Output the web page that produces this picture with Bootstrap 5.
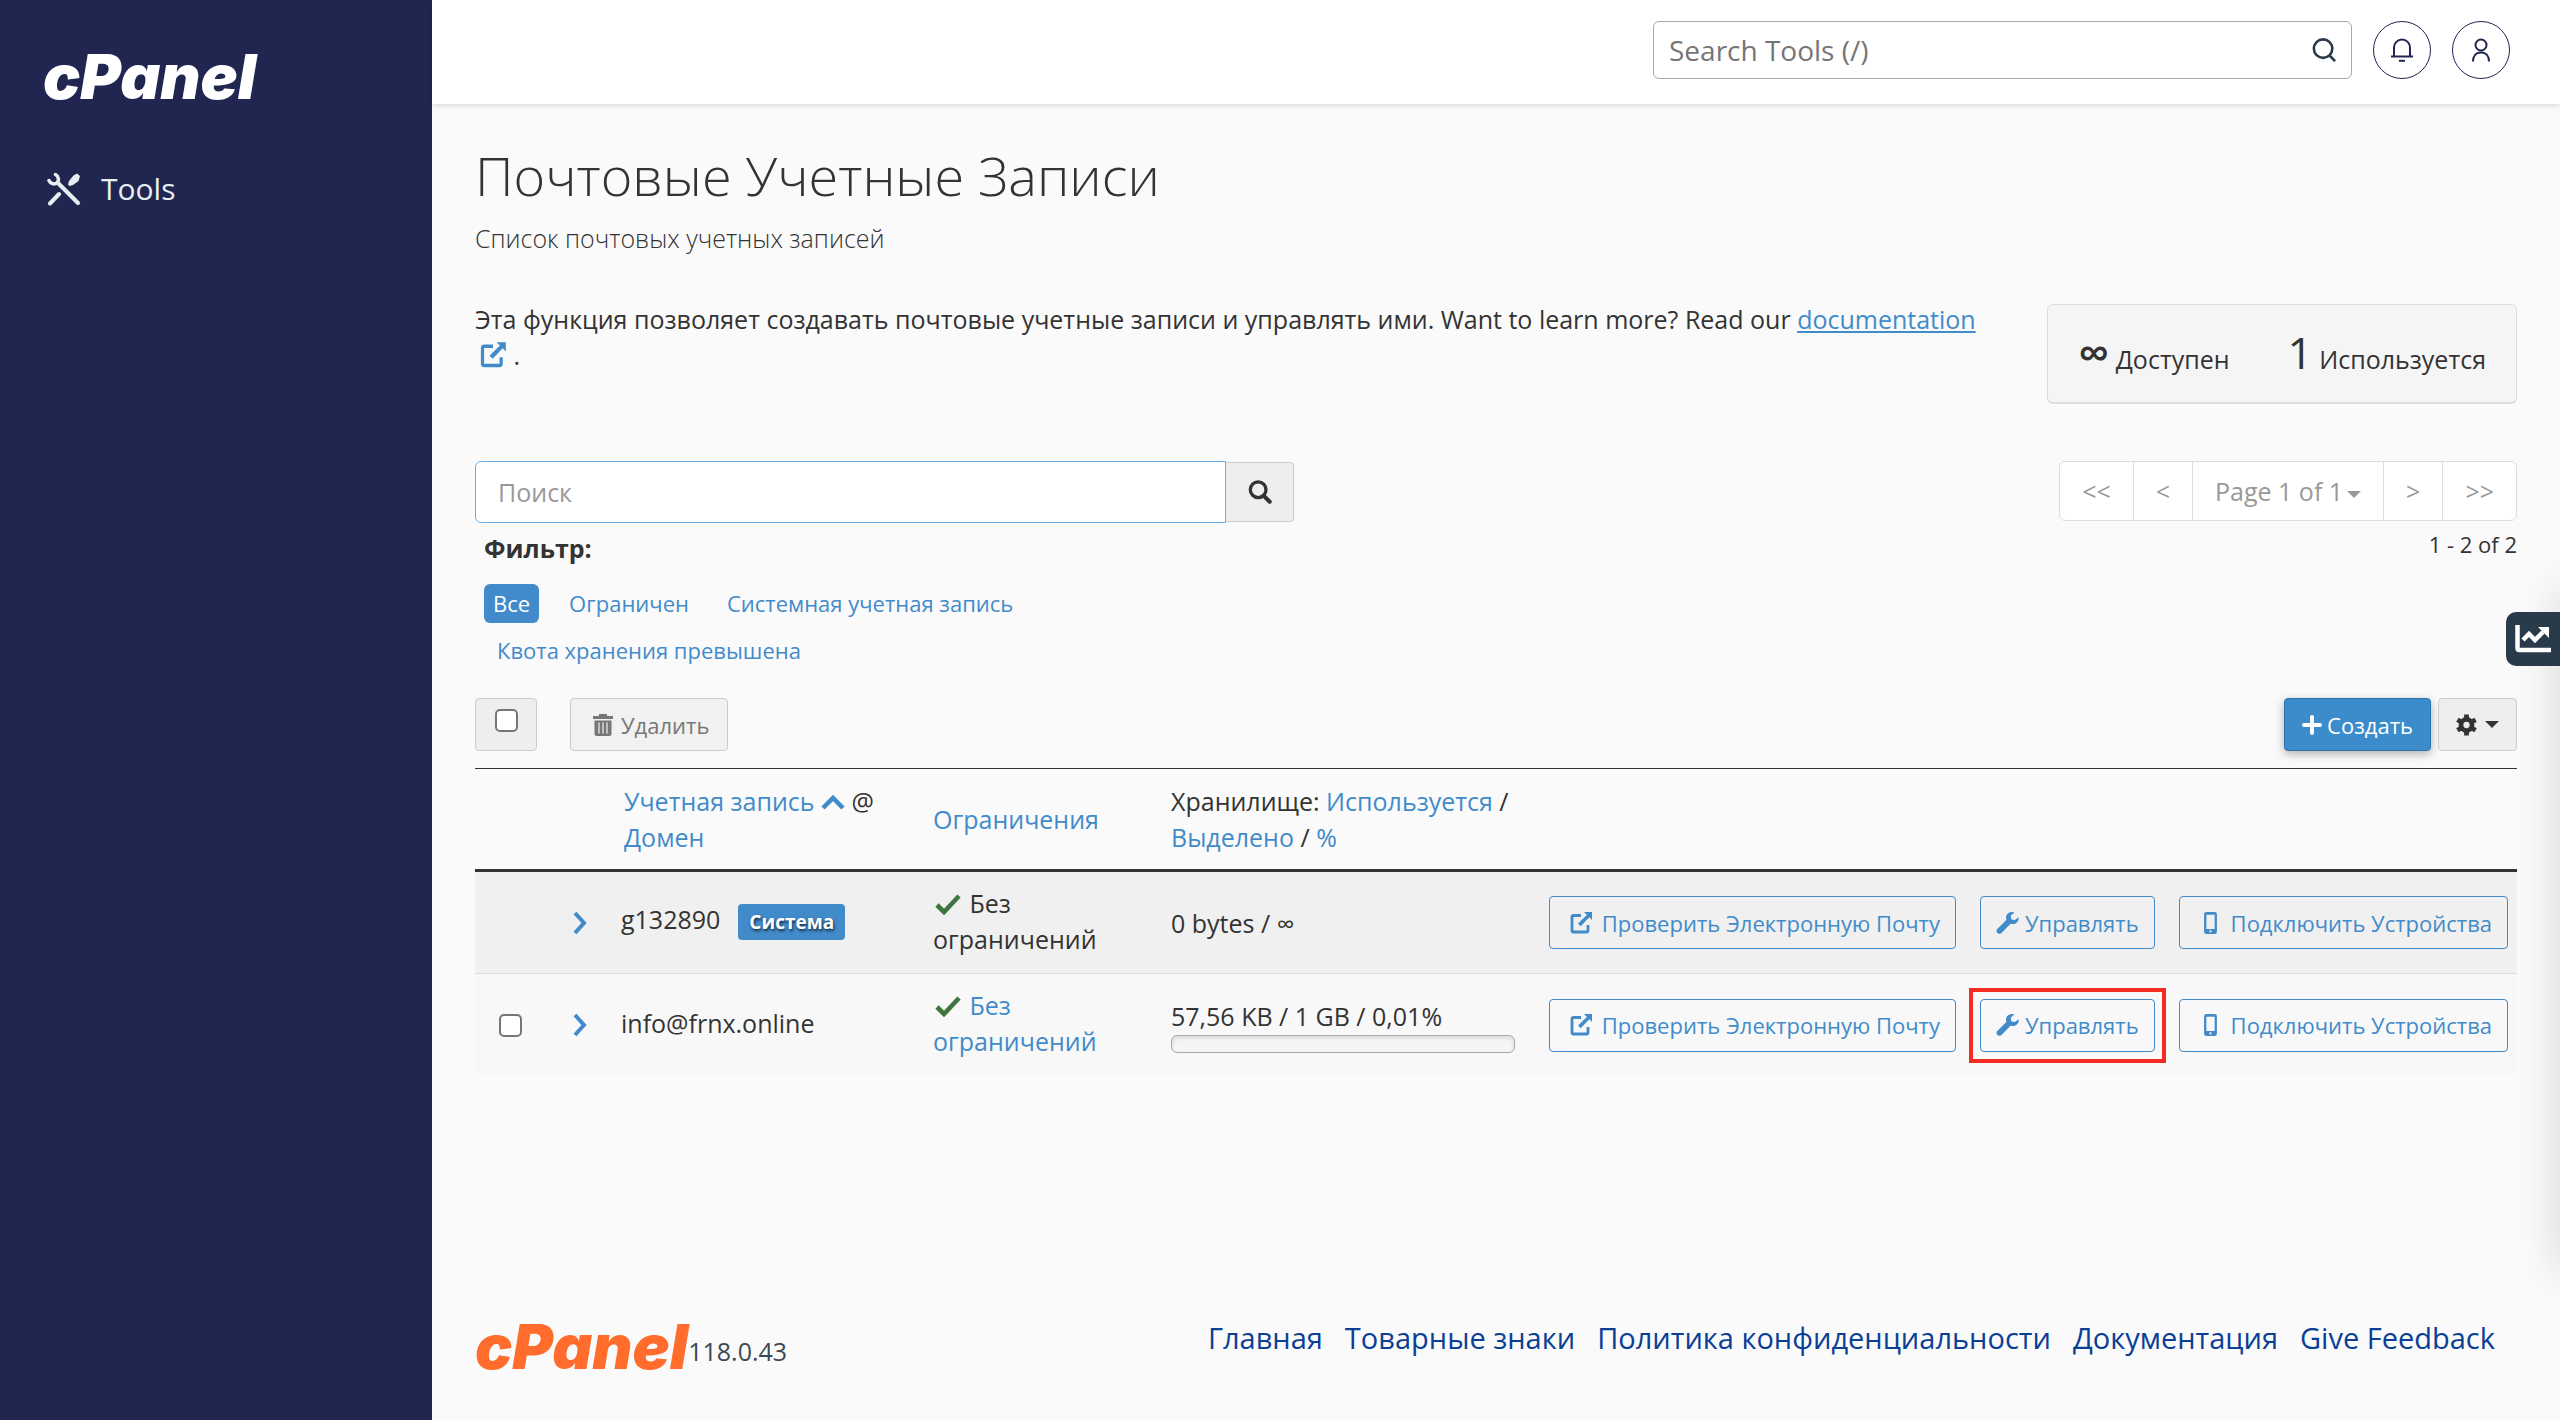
<!DOCTYPE html>
<html lang="ru">
<head>
<meta charset="utf-8">
<meta name="viewport" content="width=device-width, initial-scale=1">
<title>cPanel - Почтовые Учетные Записи</title>
<link rel="stylesheet" href="https://cdn.jsdelivr.net/npm/bootstrap@5.3.0/dist/css/bootstrap.min.css">
<style>
:root { --ink:#333; --blue:#428bca; --navy:#212651; }
body { font-family:"Open Sans","Noto Sans",sans-serif; font-size:25px; line-height:36px; color:var(--ink); background:#fafafa; }
a { color:var(--blue); text-decoration:none; }
svg { display:block; flex:none; }
.ico { width:24px; height:24px; }
.side { width:432px; background:var(--navy); flex:none; padding:42px 0 0 43px; }
.brand { font-family:Inter,sans-serif; font-weight:900; font-style:italic; font-size:62px; line-height:70px; color:#fff; }
.side-link { color:#e6eef2; font-size:30px; line-height:42px; margin-top:56px; gap:20px; padding-left:4px; }
.side-link svg { width:34px; height:34px; }
.topbar { height:104px; background:#fff; box-shadow:0 2px 5px rgba(0,0,0,.12); padding:21px 50px 0 0; gap:21px; }
.tool-search { width:699px; height:58px; border:1px solid #aaa; border-radius:6px; background:#fff; padding:0 15px; }
.tool-search input { font-size:28px; border:0; outline:0; min-width:0; background:none; color:#333; padding:0; }
.tool-search input::placeholder { color:#757575; opacity:1; }
.plain { background:none; border:0; padding:0; }
.round-btn { width:58px; height:58px; border:1px solid var(--navy); border-radius:50%; background:#fff; color:var(--navy); padding:0; }
.page-body { padding:40px 43px 0 43px; }
h1 { font-size:54px; line-height:62px; font-weight:300; margin:0 0 14px; }
.sub { font-weight:300; margin:0; }
.intro { margin-top:45px; gap:44px; }
.intro p { margin:0; }
.doc { text-decoration:underline; }
.intro p svg { display:inline-block; vertical-align:-4px; width:28px; height:28px; margin-left:4px; }
.stats { margin-top:3px; height:100px; background:#f5f5f5; border:1px solid #ddd; border-bottom-width:2px; border-radius:6px; padding:22px 30px 0; gap:58px; }
.big-num { font-size:44px; line-height:50px; }
.find-row { margin-top:57px; }
.find-col { width:819px; }
.find { height:62px; border:1px solid #66afe9; border-radius:6px 0 0 6px; font-size:25px; padding:0 22px; color:#333; background:#fff; outline:0; min-width:0; }
.find::placeholder { color:#999; opacity:1; }
.grey-btn { background:#eee; border:1px solid #ccc; border-radius:4px; color:#333; font-size:22px; line-height:32px; padding:0; }
.find-btn { width:68px; height:60px; border-left:0; border-radius:0 4px 4px 0; }
.filters { padding:7px 9px 0; }
.filters b { display:block; margin-bottom:18px; }
.chips { column-gap:8px; row-gap:8px; font-size:22px; line-height:31px; }
.chips a { padding:4px 13px; border-radius:6px; }
.chips a.all { background:var(--blue); color:#fff; padding:4px 9px; margin-right:9px; }
.chips a.wide { margin-right:4px; }
.pager { height:60px; background:#fff; border:1px solid #ddd; border-radius:6px; }
.pager button { border:0; background:none; color:#999; padding:0 22px; border-right:1px solid #ddd; font-size:25px; line-height:36px; }
.pager button:last-child { border:0; }
.range { font-size:22px; line-height:30px; margin-top:8px; }
.tri { display:inline-block; border:7px solid transparent; border-top-color:currentColor; border-bottom:0; vertical-align:middle; }
.tools { margin-top:28px; margin-bottom:17px; }
.tools .grey-btn { height:53px; }
.tools .pick { width:62px; margin-right:33px; padding-top:10px; }
.tick { width:23px; height:23px; margin:0; appearance:none; border:2px solid #767676; border-radius:5px; background:#fff; display:block; }
.tools .del { padding:0 18px 0 22px; color:#777; gap:8px; background:#f1f1f1; }
.create { height:53px; background:#3c8ccc; border:1px solid #2f73ad; border-radius:4px; color:#fff; font-size:22px; line-height:32px; padding:0 17px; gap:5px; box-shadow:0 3px 10px rgba(0,0,0,.3); margin-right:7px; }
.gear { width:79px; gap:8px; }
.acct { width:100%; table-layout:fixed; border-collapse:separate; border-spacing:0; border-top:1px solid #333; }
.acct th { font-weight:400; padding:14px 0; border-bottom:3px solid #333; vertical-align:middle; }
.acct th.name { padding-left:3px; }
.acct td { padding:14px 0; height:102px; vertical-align:middle; }
.acct td.up { padding:12px 0 16px; }
.acct tbody tr:first-child td { background:#f0f0f0; border-bottom:1px solid #ddd; }
.acct tbody tr:last-child td { background:#f8f8f8; }
.acct svg.inl { display:inline-block; vertical-align:-2px; }
.acct svg.sort { display:inline-block; vertical-align:1px; }
.sys { background:var(--blue); color:#fff; font-size:19px; line-height:28px; font-weight:700; padding:4px 11px; border-radius:4px; text-shadow:1px 2px 3px rgba(0,0,0,.7); margin-left:18px; }
.usage { width:344px; height:18px; border:1px solid #aaa; border-radius:6px; background:#f5f5f5; box-shadow:inset 0 2px 4px rgba(0,0,0,.12); margin-top:1px; }
.acts { gap:24px; padding-right:9px; }
.act { height:53px; border:1px solid var(--blue); border-radius:4px; background:transparent; color:var(--blue); font-size:22px; line-height:32px; padding:0 15px; white-space:nowrap; gap:5px; }
.marked { outline:4px solid #f42b20; outline-offset:7px; }
.foot { padding:0 65px 38px 43px; }
.foot .brand { color:#ff6c2c; }
.ver { color:#3a4955; padding-bottom:13px; }
.foot nav { font-size:29px; line-height:40px; gap:22px; padding-bottom:18px; }
.foot nav a { color:#0b3f96; }
.stat-tab { position:fixed; right:0; top:612px; width:54px; height:54px; background:#293a4a; border:0; border-radius:10px 0 0 10px; padding:0 0 0 8px; color:#fff; }
.edge { position:fixed; right:-20px; top:590px; width:20px; bottom:150px; box-shadow:0 0 40px rgba(0,0,0,.2); }
</style>
<script src="https://cdn.jsdelivr.net/npm/bootstrap@5.3.0/dist/js/bootstrap.bundle.min.js"></script>
</head>
<body>
<svg width="0" height="0" class="position-absolute" aria-hidden="true">
  <symbol id="ext" viewBox="0 0 24 24"><path d="M12 4.500H4.500a1.500 1.500 0 0 0-1.500 1.500V19.500a1.500 1.500 0 0 0 1.500 1.500H17.500a1.500 1.500 0 0 0 1.500-1.500V14" fill="none" stroke="currentColor" stroke-width="2.800"/><path d="M15 1h8v8l-2.700-2.700-8.600 9-2.700-2.700 8.900-8.700z" fill="currentColor"/></symbol>
  <symbol id="wrench" viewBox="0 0 24 24"><path d="M22.600 6.200 19 9l-3.600-.5-.7-3.800 3.500-3.300C15 .3 11.500 1.600 10.400 4.600c-.6 1.700-.4 3 .1 4.200L1.500 17.800c-1.300 1.300-1.300 3.100-.2 4.200s2.900 1.100 4.200-.1l9.100-9.200c1.500.6 3.300.6 4.900-.3 2.300-1.200 3.700-3.600 3.100-6.200z" fill="currentColor"/></symbol>
  <symbol id="phone" viewBox="0 0 16 24"><path fill-rule="evenodd" d="M3.500 0h9A2.500 2.500 0 0 1 15 2.500v19a2.500 2.500 0 0 1-2.500 2.500h-9A2.500 2.500 0 0 1 1 21.500v-19A2.500 2.500 0 0 1 3.500 0zM3.500 3v15.500h9V3zM8 20a1.200 1.200 0 1 0 0 2.400A1.200 1.200 0 0 0 8 20z" fill="currentColor"/></symbol>
  <symbol id="check" viewBox="0 0 26 22"><path d="M2 12l7 7L24 3" fill="none" stroke="#3c763d" stroke-width="4.600"/></symbol>
  <symbol id="chev" viewBox="0 0 16 24"><path d="M3 2l9 10-9 10" fill="none" stroke="currentColor" stroke-width="4"/></symbol>
  <symbol id="lens" viewBox="0 0 26 26"><circle cx="11" cy="10.500" r="8.500" fill="none" stroke="currentColor" stroke-width="3.600"/><path d="M17 17l6.500 6.500" stroke="currentColor" stroke-width="4.400" stroke-linecap="round"/></symbol>
</svg>
<div class="d-flex min-vh-100">
  <aside class="side">
    <div class="brand">cPanel</div>
    <a href="#" class="side-link d-flex align-items-center">
      <svg viewBox="0 0 34 34" fill="none" stroke="currentColor" stroke-width="4" stroke-linecap="round"><path d="M10.500 10.500L31 31"/><path d="M12 22L3 31.500"/><path d="M8.500 2.500a5.500 5.500 0 0 1 1.500 8.500A5.500 5.500 0 0 1 2 8.500" stroke-width="3.500"/><path d="M30 1.500l3 2.500-1.500 5-5.500 4-3.500 1-1.500-1.500 1-3.500 4.500-5.500z" fill="currentColor" stroke="none"/></svg>
      Tools</a>
  </aside>
  <main class="flex-grow-1 d-flex flex-column">
    <header class="topbar d-flex justify-content-end align-items-start">
      <form class="tool-search d-flex align-items-center">
        <input type="search" class="flex-grow-1" placeholder="Search Tools (/)" aria-label="Search Tools">
        <button class="plain" type="button" aria-label="Search"><svg class="ico" viewBox="0 0 26 26" fill="none" stroke="#293a4a" stroke-width="2.800"><circle cx="12" cy="11.500" r="10"/><path d="M19 19l6 6"/></svg></button>
      </form>
      <button class="round-btn d-flex align-items-center justify-content-center" type="button" aria-label="Notifications"><svg width="22" height="24" viewBox="0 0 22 24" fill="none" stroke="currentColor" stroke-width="2"><path d="M0 18.500h22M3 18V9.500a8 8 0 0 1 16 0V18"/><path d="M8 22.800h6"/></svg></button>
      <button class="round-btn d-flex align-items-center justify-content-center" type="button" aria-label="Account"><svg width="18" height="24" viewBox="0 0 18 24" fill="none" stroke="currentColor" stroke-width="2"><circle cx="9" cy="7" r="5.500"/><path d="M1 23.500c0-5 2.500-9 8-9s8 4 8 9"/></svg></button>
    </header>
    <div class="page-body flex-grow-1">
      <h1>Почтовые Учетные Записи</h1>
      <p class="sub">Список почтовых учетных записей</p>
      <div class="intro d-flex align-items-start">
        <p class="flex-grow-1">Эта функция позволяет создавать почтовые учетные записи и управлять ими. Want to learn more? Read our <a href="#" class="doc">documentation</a> <a href="#" aria-label="Открыть документацию"><svg><use href="#ext"/></svg></a> .</p>
        <div class="stats d-flex text-nowrap">
          <span><span class="big-num fw-semibold">∞</span> Доступен</span>
          <span><span class="big-num">1</span> Используется</span>
        </div>
      </div>
      <div class="find-row d-flex justify-content-between align-items-start">
        <div class="find-col">
          <div class="d-flex align-items-center">
            <input class="find flex-grow-1" type="text" placeholder="Поиск" aria-label="Поиск">
            <button class="grey-btn find-btn d-flex align-items-center justify-content-center" type="button" aria-label="Найти"><svg class="ico"><use href="#lens"/></svg></button>
          </div>
          <div class="filters">
            <b>Фильтр:</b>
            <div class="chips d-flex flex-wrap">
              <a href="#" class="all">Все</a><a href="#" class="wide">Ограничен</a><a href="#">Системная учетная запись</a><a href="#">Квота хранения превышена</a>
            </div>
          </div>
        </div>
        <div class="text-end">
          <div class="pager d-flex">
            <button type="button">&lt;&lt;</button><button type="button">&lt;</button><button type="button">Page 1 of 1<span class="tri ms-1"></span></button><button type="button">&gt;</button><button type="button">&gt;&gt;</button>
          </div>
          <div class="range">1 - 2 of 2</div>
        </div>
      </div>
      <div class="tools d-flex">
        <label class="grey-btn pick d-flex justify-content-center"><input class="tick" type="checkbox" aria-label="Выбрать все"></label>
        <button class="grey-btn del d-flex align-items-center" type="button"><svg width="20" height="22" viewBox="0 0 20 22"><path d="M0 2h6V0h8v2h6v3H0zM1.500 6.500h17V20a2 2 0 0 1-2 2h-13a2 2 0 0 1-2-2z" fill="currentColor"/><path d="M6 8.500v11M10 8.500v11M14 8.500v11" stroke="#f1f1f1" stroke-width="1.200"/></svg>Удалить</button>
        <button class="create d-flex align-items-center ms-auto" type="button"><svg width="20" height="20" viewBox="0 0 20 20" stroke="#fff" stroke-width="4" stroke-linecap="round"><path d="M10 2v16M2 10h16"/></svg>Создать</button>
        <button class="grey-btn gear d-flex align-items-center justify-content-center" type="button" aria-label="Настройки"><svg width="21" height="22" viewBox="0 0 22 22"><g fill="none" stroke="currentColor"><circle cx="11" cy="11" r="5.800" stroke-width="5"/><path d="M11 0v5M11 17v5M1.500 5.500l4.300 2.500M16.200 14l4.300 2.500M1.500 16.500l4.300-2.500M16.200 8l4.300-2.500" stroke-width="5"/></g></svg><span class="tri"></span></button>
      </div>
      <table class="acct">
        <colgroup><col style="width:92px"><col style="width:54px"><col style="width:312px"><col style="width:238px"><col style="width:365px"><col></colgroup>
        <thead><tr>
          <th></th><th></th>
          <th class="name"><a href="#">Учетная запись</a> <svg class="sort" width="24" height="16" viewBox="0 0 24 16"><path d="M2 14l10-10 10 10" fill="none" stroke="#428bca" stroke-width="4.500"/></svg> @<br><a href="#">Домен</a></th>
          <th><a href="#">Ограничения</a></th>
          <th>Хранилище: <a href="#">Используется</a> / <a href="#">Выделено</a> / <a href="#">%</a></th>
          <th></th>
        </tr></thead>
        <tbody>
          <tr>
            <td></td>
            <td><a href="#" aria-label="Развернуть"><svg width="26" height="24"><use href="#chev"/></svg></a></td>
            <td class="up">g132890<span class="sys d-inline-block">Система</span></td>
            <td class="up"><svg class="inl" width="30" height="22"><use href="#check"/></svg> Без<br>ограничений</td>
            <td>0 bytes / ∞</td>
            <td><div class="acts d-flex justify-content-end">
              <button class="act d-flex align-items-center" type="button"><svg class="ico ms-1 me-1"><use href="#ext"/></svg>Проверить Электронную Почту</button>
              <button class="act d-flex align-items-center" type="button"><svg class="ico"><use href="#wrench"/></svg>Управлять</button>
              <button class="act d-flex align-items-center" type="button"><svg class="ms-2 me-2" width="15" height="22"><use href="#phone"/></svg>Подключить Устройства</button>
            </div></td>
          </tr>
          <tr>
            <td><input class="tick ms-4" type="checkbox" aria-label="info@frnx.online"></td>
            <td><a href="#" aria-label="Развернуть"><svg width="26" height="24"><use href="#chev"/></svg></a></td>
            <td class="up">info@frnx.online</td>
            <td class="up"><svg class="inl" width="30" height="22"><use href="#check"/></svg> <a href="#">Без<br>ограничений</a></td>
            <td>57,56 KB / 1 GB / 0,01%<div class="usage"></div></td>
            <td><div class="acts d-flex justify-content-end">
              <button class="act d-flex align-items-center" type="button"><svg class="ico ms-1 me-1"><use href="#ext"/></svg>Проверить Электронную Почту</button>
              <div class="marked"><button class="act d-flex align-items-center" type="button"><svg class="ico"><use href="#wrench"/></svg>Управлять</button></div>
              <button class="act d-flex align-items-center" type="button"><svg class="ms-2 me-2" width="15" height="22"><use href="#phone"/></svg>Подключить Устройства</button>
            </div></td>
          </tr>
        </tbody>
      </table>
    </div>
    <footer class="foot d-flex justify-content-between align-items-center">
      <div class="d-flex align-items-end"><span class="brand">cPanel</span><span class="ver">118.0.43</span></div>
      <nav class="d-flex"><a href="#">Главная</a><a href="#">Товарные знаки</a><a href="#">Политика конфиденциальности</a><a href="#">Документация</a><a href="#">Give Feedback</a></nav>
    </footer>
  </main>
</div>
<div class="edge"></div>
<button class="stat-tab" type="button" aria-label="Статистика"><svg width="38" height="28" viewBox="0 0 38 28"><path d="M3.500 0v23.500a1.500 1.500 0 0 0 1.500 1.500h32" fill="none" stroke="#fff" stroke-width="4.500"/><path d="M9 15l6-6 6 6 8-8" fill="none" stroke="#fff" stroke-width="4.500"/><path d="M24 2h11v11z" fill="#fff"/></svg></button>
</body>
</html>
